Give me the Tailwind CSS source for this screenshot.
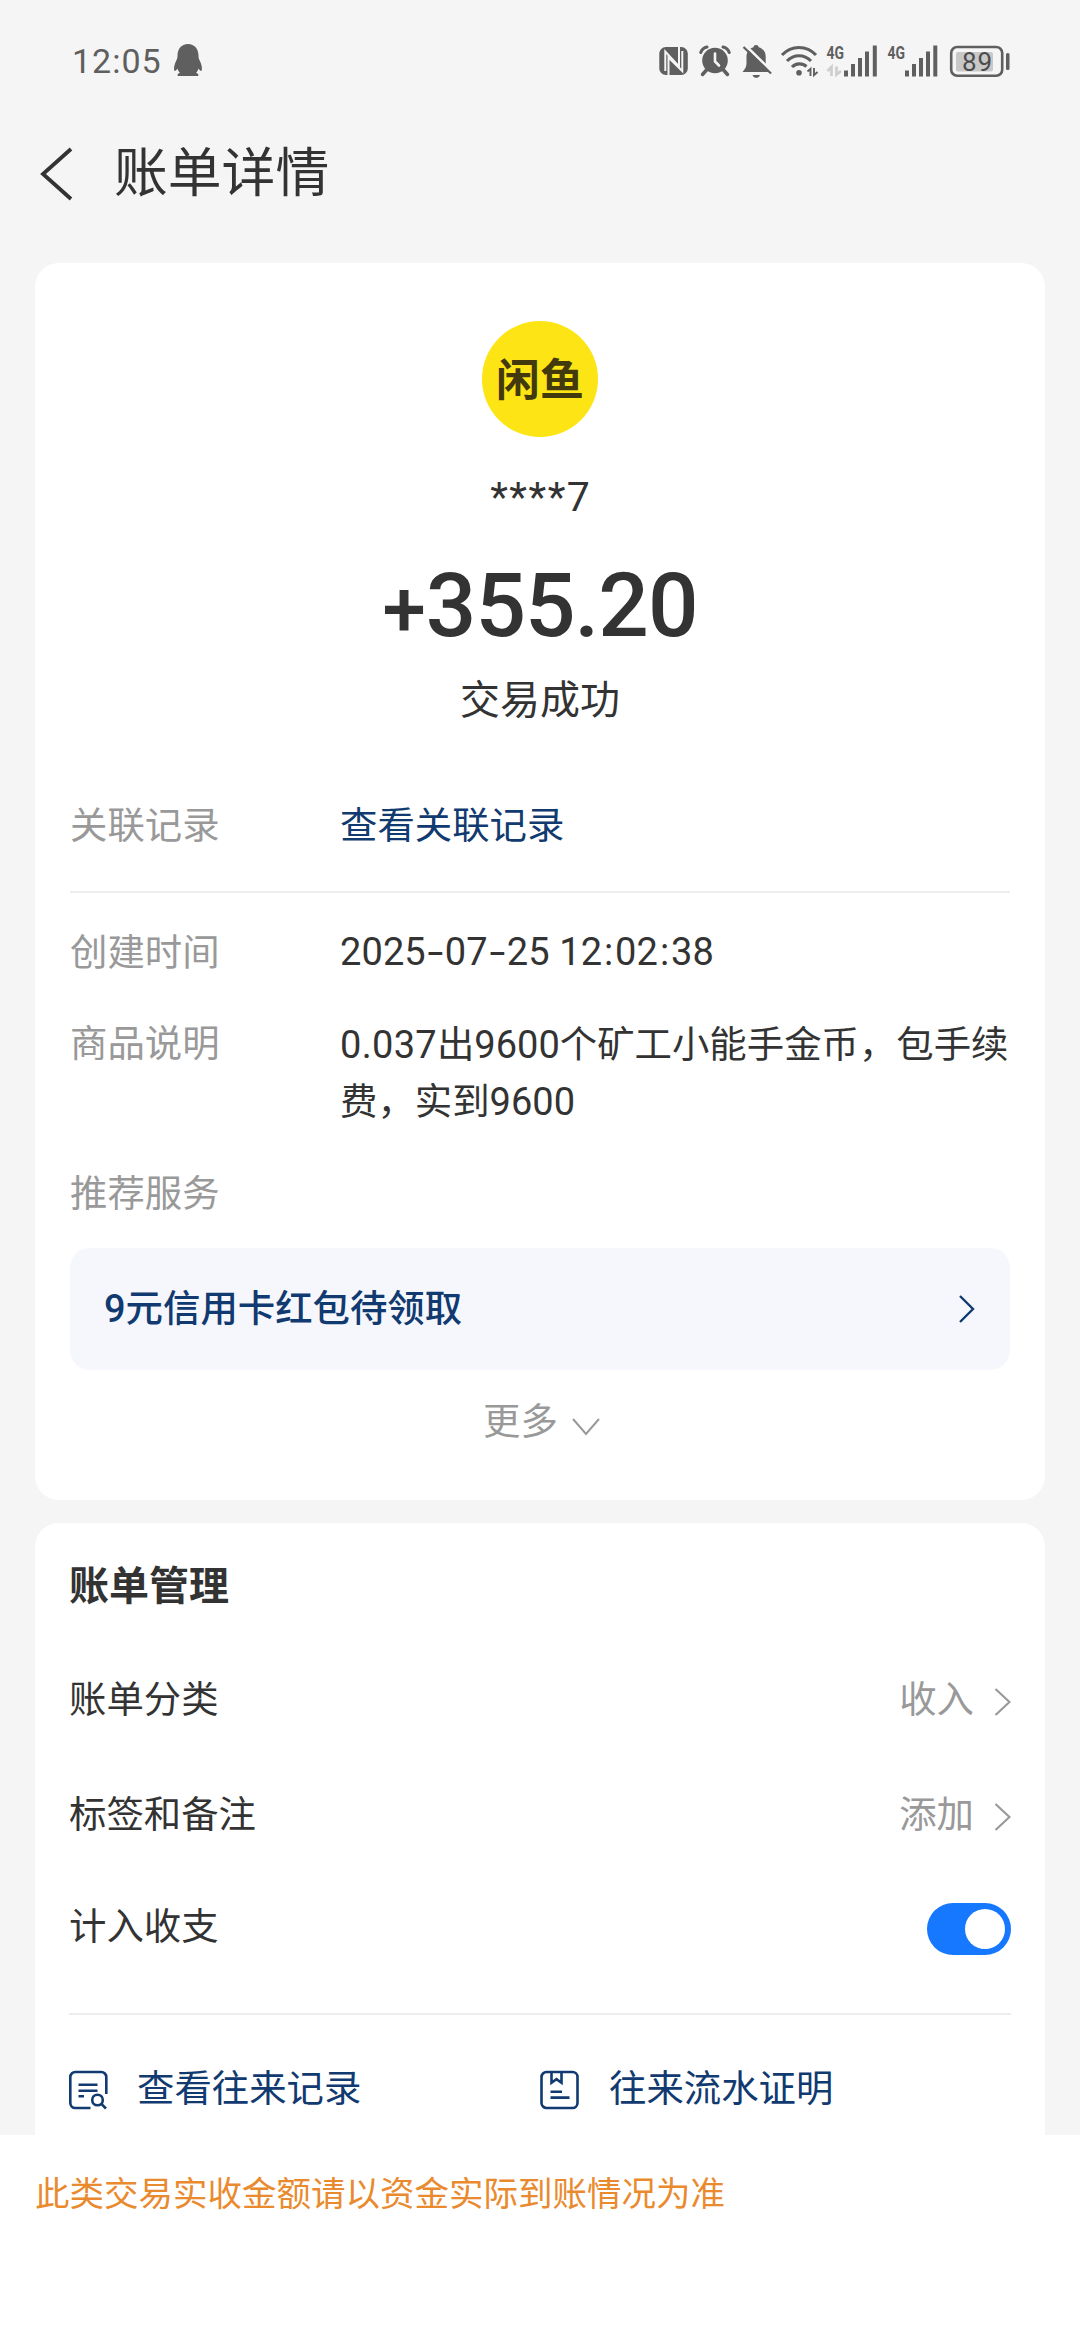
<!DOCTYPE html>
<html lang="zh-CN">
<head>
<meta charset="utf-8">
<title>账单详情</title>
<script src="https://cdn.jsdelivr.net/npm/@tailwindcss/browser@4"></script>
</head>
<body class="w-[1080px] h-[2340px] overflow-hidden bg-[#f5f5f5] flex flex-col text-[#333] text-[37.4px] font-['Noto_Sans_CJK_SC',sans-serif]">

  <!-- Status bar -->
  <header class="h-[122px] shrink-0 flex items-center pl-[72px] text-[#5f5f5f]">
    <span class="w-[99px] font-['Roboto',sans-serif] text-[34px] leading-[40px] tracking-[1px] whitespace-nowrap">12:05</span>
    <svg class="w-[32px] h-[36px] ml-[1px]" viewBox="172 44 32 36" fill="#5f5f5f">
      <path d="M188 45c-6.500 0-10.500 5-10.500 11.500 0 2-.2 3-1.200 5-1.800 3.500-2.800 7.500-2 10 .6 1.200 2-.2 3.200-2 .5 1.800 1.300 3.200 2.500 4.300-1.800.6-2.800 1.600-2.300 3.200h20.600c.5-1.600-.5-2.600-2.300-3.200 1.200-1.100 2-2.500 2.500-4.300 1.200 1.800 2.600 3.200 3.200 2 .8-2.500-.2-6.500-2-10-1-2-1.200-3-1.200-5C198.500 50 194.500 45 188 45z"/>
    </svg>
    <div class="ml-[454px] mt-[1px] flex items-center">
      <svg class="w-[31px] h-[36px]" viewBox="658 44 31 36">
        <rect x="659.300" y="47" width="28.500" height="28" rx="6.500" fill="#5f5f5f"/>
        <path d="M665.300 71V51.500L679 66.500V47" fill="none" stroke="#f5f5f5" stroke-width="2"/>
        <path d="M668.500 75.500V57.500L682.300 71V51" fill="none" stroke="#f5f5f5" stroke-width="2"/>
      </svg>
      <svg class="w-[34px] h-[36px] ml-[10px]" viewBox="699 44 34 36" fill="none" stroke-linecap="round">
        <circle cx="715" cy="60.500" r="12.800" fill="#5f5f5f"/>
        <path d="M700.800 52.500c1-3 3-4.800 6.200-5.500M729.200 52.500c-1-3-3-4.800-6.200-5.500" stroke="#5f5f5f" stroke-width="3"/>
        <path d="M706.500 70l-4 4.500M723.500 70l4 4.500" stroke="#5f5f5f" stroke-width="3.500"/>
        <path d="M715 53.500v8l4 4" stroke="#f5f5f5" stroke-width="2.600"/>
      </svg>
      <svg class="w-[32px] h-[36px] ml-[8px]" viewBox="741 44 32 36">
        <path d="M756 45c1.500 0 2.500.9 2.700 2.200 4.300 1.300 7 4.800 7 9.300v6.500c0 3.500 1.300 6 4 9H742.500c2.700-3 4-5.500 4-9v-6.500c0-4.500 2.700-8 7-9.300.2-1.300 1.200-2.200 2.500-2.200z" fill="#5f5f5f"/>
        <path d="M752.500 75h7.500c-.6 1.900-1.900 2.800-3.700 2.800s-3.200-.9-3.800-2.800z" fill="#5f5f5f"/>
        <path d="M745.500 45.500l27 26.500" stroke="#f5f5f5" stroke-width="2.600"/>
        <path d="M743.500 47l27.500 26.500" stroke="#5f5f5f" stroke-width="2.200"/>
      </svg>
      <svg class="w-[40px] h-[36px] ml-[7px]" viewBox="780 44 40 36" fill="none" stroke="#5f5f5f" stroke-width="3.200">
        <path d="M782 55c9.500-10 24.500-10 34 0M787 61c6.800-7 17.200-7 24 0M792 67c3.800-4.200 10.500-4.200 14.500-.5"/>
        <circle cx="799" cy="72.800" r="2.800" fill="#5f5f5f" stroke="none"/>
        <path d="M807.500 71.500l3-2.700V76M814 68v7.200l3.500-3.200" stroke-width="1.900"/>
      </svg>
      <svg class="w-[53px] h-[52px] ml-[6px] overflow-visible" viewBox="826 36 53 52">
        <text x="826.500" y="58.800" font-family="Roboto" font-weight="700" font-size="18.500" textLength="17.500" lengthAdjust="spacingAndGlyphs" fill="#5f5f5f">4G</text>
        <path d="M827.500 71l4-4V76M836.500 66.500v8l4.500-3.500" fill="none" stroke="#cdcdcd" stroke-width="2.600"/>
        <path d="M846 70.500v6M853 64v12.500M860 58v18.500M867 51.500v25M874.800 45.500v31" stroke="#5f5f5f" stroke-width="4"/>
      </svg>
      <svg class="w-[52px] h-[52px] ml-[8px] overflow-visible" viewBox="887 36 52 52">
        <text x="887.500" y="58.800" font-family="Roboto" font-weight="700" font-size="18.500" textLength="17.500" lengthAdjust="spacingAndGlyphs" fill="#5f5f5f">4G</text>
        <path d="M907 70.500v6M914 64v12.500M921 58v18.500M928 51.500v25M935.300 45.500v31" stroke="#5f5f5f" stroke-width="4"/>
      </svg>
      <svg class="w-[62px] h-[36px] ml-[10px]" viewBox="949 44 62 36">
        <rect x="951.200" y="47" width="51" height="28.800" rx="6" fill="none" stroke="#5f5f5f" stroke-width="2.600"/>
        <rect x="956" y="52" width="37" height="19.500" rx="2" fill="#c8c8c8"/>
        <rect x="1006" y="53" width="3.500" height="17" rx="1.500" fill="#5f5f5f"/>
        <text x="977.500" y="70.500" text-anchor="middle" font-family="Roboto" font-size="26" letter-spacing="1" fill="#4c4c4c">89</text>
      </svg>
    </div>
  </header>

  <!-- Title bar -->
  <nav class="h-[141px] shrink-0 flex items-start pl-[40px]">
    <svg class="w-[34px] h-[54px] mt-[25px]" viewBox="0 0 34 54" fill="none" stroke="#333" stroke-width="3.800"><path d="M31 2L3 27l28 25"/></svg>
    <h1 class="ml-[40px] mt-[7px] text-[53.800px] leading-[80px]">账单详情</h1>
  </nav>

  <!-- Bill summary -->
  <section class="mx-[35px] h-[1237px] shrink-0 bg-white rounded-[24px] px-[35px] flex flex-col">
    <div class="mt-[58px] size-[116px] shrink-0 rounded-full bg-[#fde414] self-center flex items-center justify-center">
      <span class="font-bold text-[44px] leading-[60px] text-[#42390d] -mt-[5px]">闲鱼</span>
    </div>
    <div class="mt-[30px] h-[60px] leading-[60px] text-center font-['Roboto',sans-serif] text-[41px]"><span class="tracking-[1.500px]">****</span>7</div>
    <div class="mt-[28px] h-[100px] flex items-center justify-center font-['Roboto',sans-serif] font-medium text-[89px] leading-[100px] tracking-[-1px]"><span class="text-[78px] tracking-[0px] pt-[10px]">+</span><span class="pt-[1px]">355.20</span></div>
    <div class="mt-[12px] h-[60px] leading-[60px] text-center text-[40px]">交易成功</div>

    <div class="mt-[68px] h-[56px] leading-[56px] flex">
      <span class="w-[270px] text-[#999]">关联记录</span>
      <span class="text-[#113a70]">查看关联记录</span>
    </div>
    <div class="mt-[40px] h-[2px] shrink-0 bg-[#eee]"></div>
    <div class="mt-[29px] h-[56px] leading-[56px] flex">
      <span class="w-[270px] text-[#999]">创建时间</span>
      <span class="font-['Roboto',sans-serif] text-[38px] tracking-[0.100px] whitespace-nowrap pt-[2px]">2025<span class="inline-block w-[19px] text-center scale-x-150">-</span>07<span class="inline-block w-[19px] text-center scale-x-150">-</span>25 12<span class="inline-block w-[13px] text-center">:</span>02<span class="inline-block w-[13px] text-center">:</span>38</span>
    </div>
    <div class="mt-[35px] h-[114px] leading-[57px] flex">
      <span class="w-[270px] shrink-0 text-[#999]">商品说明</span>
      <p class="whitespace-nowrap pt-[1px]"><span class="font-['Roboto',sans-serif] text-[38px] leading-[40px] tracking-[0.300px]">0.037</span>出<span class="font-['Roboto',sans-serif] text-[38px] leading-[40px]">9600</span>个矿工小能手金币，包手续<br>费，实到<span class="font-['Roboto',sans-serif] text-[38px] leading-[40px]">9600</span></p>
    </div>
    <div class="mt-[36px] h-[56px] leading-[56px] text-[#999]">推荐服务</div>
    <div class="mt-[29px] h-[122px] shrink-0 bg-[#f6f7fc] rounded-[20px] pl-[34px] pr-[34px] flex items-center justify-between text-[#113a70]">
      <span class="font-medium leading-[56px] pb-[7px]"><span class="font-['Roboto',sans-serif] text-[38px] leading-[40px]">9</span>元信用卡红包待领取</span>
      <svg class="w-[18px] h-[30px]" viewBox="0 0 18 30" fill="none" stroke="#113a70" stroke-width="2.400"><path d="M2 2l13 13L2 28"/></svg>
    </div>
    <div class="mt-[21px] h-[56px] leading-[56px] flex items-start pl-[413px] text-[#999]">
      <span>更多</span>
      <svg class="w-[28px] h-[20px] ml-[14px] mt-[26px]" viewBox="0 0 28 20" fill="none" stroke="#999" stroke-width="2"><path d="M1 2l13 15L27 2"/></svg>
    </div>
  </section>

  <!-- Bill management -->
  <section class="mx-[35px] mt-[23px] h-[612px] shrink-0 bg-white rounded-t-[24px] pl-[34px] pr-[34px] flex flex-col">
    <h2 class="mt-[30px] h-[60px] leading-[60px] text-[40px] font-bold">账单管理</h2>
    <div class="mt-[54px] h-[60px] leading-[60px] flex justify-between">
      <span>账单分类</span>
      <span class="flex text-[#999]">收入<svg class="w-[18px] h-[30px] ml-[19px] mt-[20px]" viewBox="0 0 18 30" fill="none" stroke="#999" stroke-width="2.200"><path d="M2.500 2l14 13-14 13"/></svg></span>
    </div>
    <div class="mt-[55px] h-[60px] leading-[60px] flex justify-between">
      <span>标签和备注</span>
      <span class="flex text-[#999]">添加<svg class="w-[18px] h-[30px] ml-[19px] mt-[20px]" viewBox="0 0 18 30" fill="none" stroke="#999" stroke-width="2.200"><path d="M2.500 2l14 13-14 13"/></svg></span>
    </div>
    <div class="mt-[52px] h-[60px] leading-[60px] flex justify-between">
      <span>计入收支</span>
      <span class="mt-[9px] w-[84px] h-[52px] rounded-full bg-[#1677ff] flex items-center justify-end pr-[6px]"><span class="size-[40px] rounded-full bg-white"></span></span>
    </div>
    <div class="mt-[59px] h-[2px] shrink-0 bg-[#eee]"></div>
    <div class="mt-[45px] h-[60px] grid grid-cols-[471px_1fr] items-center text-[#113a70]">
      <div class="flex items-center">
        <svg class="w-[40px] h-[40px]" viewBox="0 0 40 40" fill="none" stroke="#113a70" stroke-width="2.600">
          <path d="M37.300 24V7a5 5 0 0 0-5-5H6.300a5 5 0 0 0-5 5v26a5 5 0 0 0 5 5H21.500"/>
          <path d="M9.500 14.700h19M9.500 20.700h19M9.500 26.300h5.500"/>
          <circle cx="28.500" cy="30" r="5.300"/><path d="M32.300 33.800l4.700 4.700"/>
        </svg>
        <span class="ml-[28px] leading-[50px] pb-[8px]">查看往来记录</span>
      </div>
      <div class="flex items-center">
        <svg class="w-[40px] h-[40px]" viewBox="0 0 40 40" fill="none" stroke="#113a70" stroke-width="2.600">
          <rect x="1.500" y="2" width="36" height="36" rx="5"/>
          <path d="M11.500 2v10.800l5-3.600 5 3.600V2M10.500 21.700h11.500M10.500 27.600h19"/>
        </svg>
        <span class="ml-[29px] leading-[50px] pb-[8px]">往来流水证明</span>
      </div>
    </div>
  </section>

  <!-- Notice -->
  <footer class="flex-1 bg-white pl-[35px] pt-[28px] text-[34.500px] leading-[56px] text-[#ea8a2e]">此类交易实收金额请以资金实际到账情况为准</footer>
</body>
</html>
